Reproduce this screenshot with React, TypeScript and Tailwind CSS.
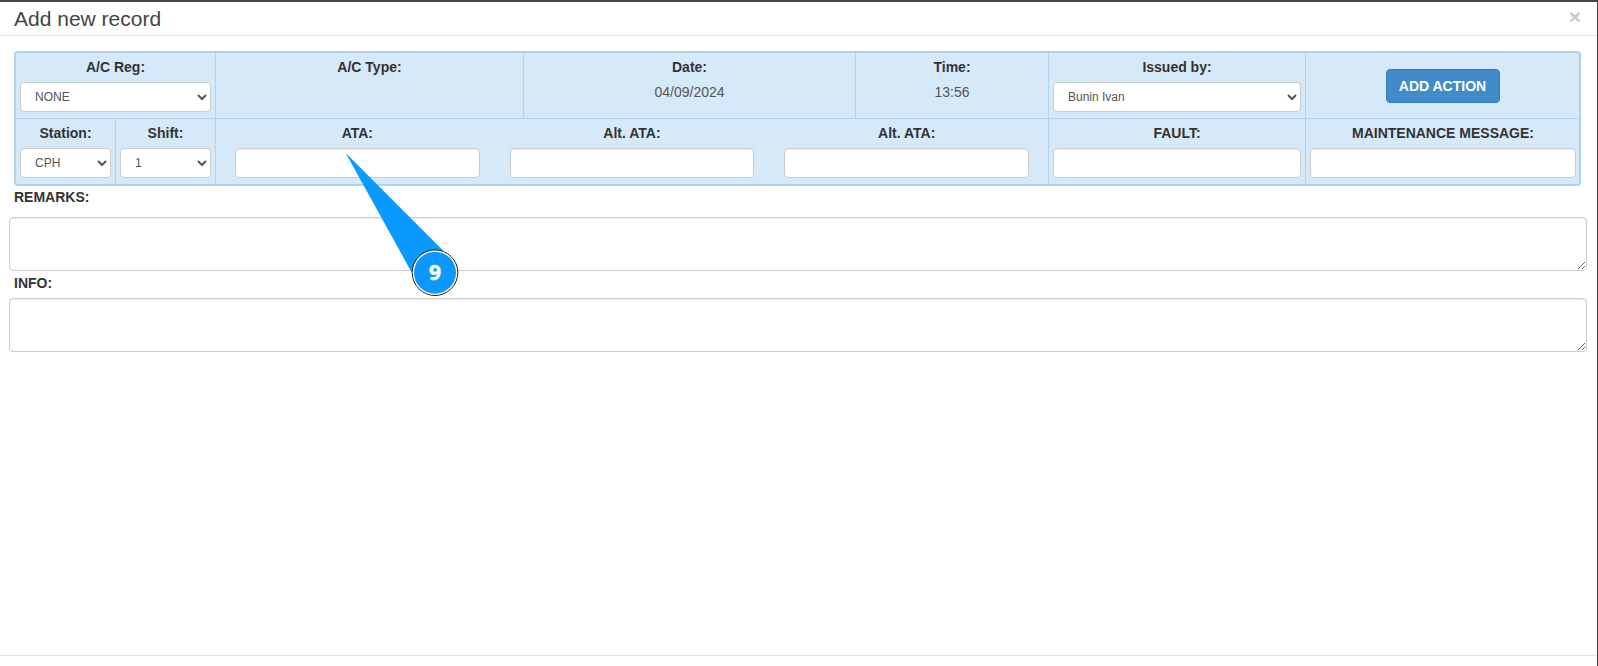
const inputClass =
  'h-[30px] w-full rounded-[4px] border border-[#ccc] bg-white shadow-[inset_0_1px_1px_rgba(0,0,0,0.075)]'
const selectClass =
  'h-[30px] w-full rounded-[4px] border border-[#ccc] bg-white pl-[10px] text-[12px] text-[#555]'
const labelClass = 'block text-center font-bold leading-[20px] text-[#333]'
const cellClass = 'border-r border-[#b3d4f0] px-[4px] pt-[4px]'

function SelectCell({ label, value, className }: { label: string; value: string; className: string }) {
  return (
    <div className={`${cellClass} ${className}`}>
      <label className={`${labelClass} mb-[5px]`}>{label}</label>
      <select className={selectClass} defaultValue={value}>
        <option>{value}</option>
      </select>
    </div>
  )
}

function InfoCell({ label, value, className }: { label: string; value?: string; className: string }) {
  return (
    <div className={`${cellClass} ${className}`}>
      <label className={`${labelClass} mb-[5px]`}>{label}</label>
      {value && <p className="text-center leading-[20px] text-[#555]">{value}</p>}
    </div>
  )
}

function InputField({ label }: { label: string }) {
  return (
    <div className="flex-1">
      <label className={`${labelClass} mb-[5px]`}>{label}</label>
      <input className={inputClass} />
    </div>
  )
}

function Callout() {
  return (
    <svg className="pointer-events-none absolute left-0 top-0 h-[666px] w-[1598px]" viewBox="0 0 1598 666">
      <polygon points="345.7,151 443,248.5 412,271" fill="#0b99ff" />
      <circle cx="435" cy="270.7" r="22.8" fill="#fff" stroke="#222" strokeWidth="1" />
      <circle cx="435" cy="270.7" r="21" fill="#0b99ff" />
      <text
        x="435"
        y="278"
        textAnchor="middle"
        fill="#fff"
        stroke="#fff"
        strokeWidth="0.5"
        fontSize="21"
        fontWeight="700"
        fontFamily="'Noto Sans', sans-serif"
      >
        9
      </text>
    </svg>
  )
}

export default function App() {
  return (
    <div className="relative flex h-[666px] w-[1598px] flex-col overflow-hidden border-r border-t-2 border-[#444] bg-white font-['Liberation_Sans',Arial,sans-serif] text-[14px] text-[#333]">
      <header className="flex h-[34px] items-center justify-between border-b border-[#e5e5e5] pl-[14px] pr-[16px]">
        <h4 className="text-[21px] leading-[30px] text-[#444]">Add new record</h4>
        <span className="mb-[4px] text-[21px] font-bold leading-none text-[#c9c9c9]">×</span>
      </header>

      <main className="flex-1 pl-[9px] pr-[10px]">
        <div className="ml-[5px] mr-[6px] mt-[15px] h-[135px] rounded-[4px] border-2 border-[#afd2ef] bg-[#d6e9f8]">
          <div className="flex h-[66px] border-b border-[#b3d4f0]">
            <SelectCell label="A/C Reg:" value="NONE" className="w-[200px]" />
            <InfoCell label="A/C Type:" className="w-[308px]" />
            <InfoCell label="Date:" value="04/09/2024" className="w-[332px]" />
            <InfoCell label="Time:" value="13:56" className="w-[193px]" />
            <SelectCell label="Issued by:" value="Bunin Ivan" className="w-[257px]" />
            <div className="flex flex-1 items-center justify-center pt-[1px]">
              <button className="h-[34px] w-[114px] rounded-[4px] border border-[#357ebd] bg-[#428bca] font-bold text-white">
                ADD ACTION
              </button>
            </div>
          </div>
          <div className="flex h-[65px]">
            <SelectCell label="Station:" value="CPH" className="w-[100px]" />
            <SelectCell label="Shift:" value="1" className="w-[100px]" />
            <div className="flex w-[833px] gap-[30px] border-r border-[#b3d4f0] px-[19px] pt-[4px]">
              <InputField label="ATA:" />
              <InputField label="Alt. ATA:" />
              <InputField label="Alt. ATA:" />
            </div>
            <div className={`${cellClass} w-[257px]`}>
              <label className={`${labelClass} mb-[5px]`}>FAULT:</label>
              <input className={inputClass} />
            </div>
            <div className="flex-1 pl-[4px] pr-[3px] pt-[4px]">
              <label className={`${labelClass} mb-[5px]`}>MAINTENANCE MESSAGE:</label>
              <input className={inputClass} />
            </div>
          </div>
        </div>

        <label className="mb-[10px] ml-[5px] mt-[1px] block font-bold leading-[20px]">REMARKS:</label>
        <textarea className="block h-[54px] w-full rounded-[4px] border border-[#ccc] shadow-[inset_0_1px_1px_rgba(0,0,0,0.075)]" />
        <label className="mb-[5px] ml-[5px] mt-[2px] block font-bold leading-[20px]">INFO:</label>
        <textarea className="block h-[54px] w-full rounded-[4px] border border-[#ccc] shadow-[inset_0_1px_1px_rgba(0,0,0,0.075)]" />
      </main>

      <footer className="h-[11px] border-t border-[#e5e5e5]" />
      <Callout />
    </div>
  )
}
